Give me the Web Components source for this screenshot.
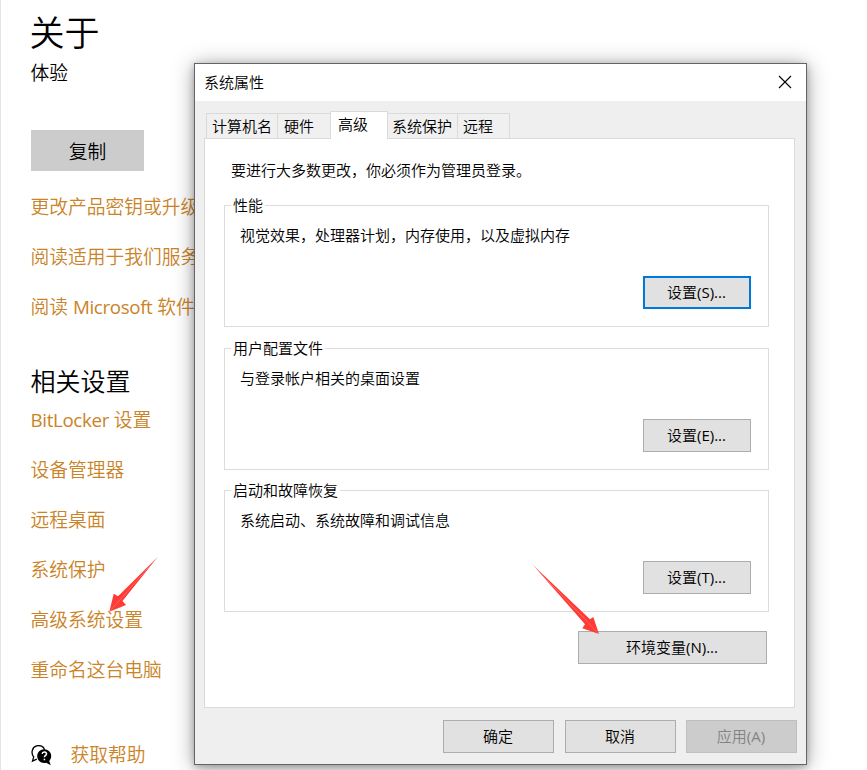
<!DOCTYPE html>
<html lang="zh-CN">
<head>
<meta charset="utf-8">
<title>系统属性</title>
<style>
  body {
    margin: 0;
    width: 867px;
    height: 770px;
    overflow: hidden;
    background: #fff;
    color: #000;
    font-family: "Open Sans", "Noto Sans CJK SC", sans-serif;
  }
  /* латиница */
  i { font-style: normal; font-weight: 400; }
  side-link i { letter-spacing: -.35px; }
</style>
</head>
<body>

<!-- страница "О системе" -->
<template id="about-tmpl">
  <style>
    :host { display: flex; flex-direction: column; align-items: flex-start; box-sizing: border-box; height: 770px; padding: 8px 0 0 29.5px; border-left: 1px solid #e5e5e5; font-size: 18.75px; font-weight: 350; }
    :host > *, h1, p, button, h2, nav, .help { flex-shrink: 0; }
    h1 { margin: 0 0 0 -1px; font-size: 35px; font-weight: 350; line-height: 50px; }
    p { margin: 1px 0 0; line-height: 28px; }
    button { width: 113px; height: 41px; margin: 43px 0 16px .5px; padding: 0; border: 0; background: #ccc; font: inherit; color: #000; }
    h2 { margin: 36px 0 1px; font-size: 25px; font-weight: 350; line-height: 36px; }
    nav { display: flex; flex-direction: column; gap: 10px; }
    .help { display: flex; align-items: center; gap: 18.500px; margin: 45px 0 0 .5px; }
    svg { width: 21px; height: 21px; }
  </style>
  <h1>关于</h1>
  <p>体验</p>
  <button>复制</button>
  <nav><slot name="links"></slot></nav>
  <h2>相关设置</h2>
  <nav><slot name="related"></slot></nav>
  <div class="help">
    <svg viewBox="0 0 21 21">
      <path d="M5.8 14.2 1.5 16l1.2-4C-.2 8.500.8 2.300 5.600.9c3.500-1 7 .5 8 3.800" fill="none" stroke="#000" stroke-width="1.300"/>
      <path d="M13.200 4.200c4 0 7 3 7 6.700 0 2-.8 3.700-2 5l1.600 4.400-4.600-2.500c-.6.2-1.300.3-2 .3-4 0-7-3-7-7s3-6.900 7-6.900z"/>
      <path d="M11.200 8.900c.2-2.600 4.700-2.300 4.300.2-.3 1.400-2.100 1.400-2.100 3.200M13.400 13.700v1.500" fill="none" stroke="#fff" stroke-width="1.500"/>
    </svg>
    <slot name="help"></slot>
  </div>
</template>

<!-- окно -->
<template id="window-tmpl">
  <style>
    :host { position: absolute; left: 194px; top: 63px; display: flex; flex-direction: column; box-sizing: border-box; width: 613px; height: 702px; border: 1px solid #636467; background: #efefef; box-shadow: 0 2px 20px rgba(0, 0, 0, .36), 0 2px 7px rgba(0, 0, 0, .24); font-size: 15px; font-weight: 350; }
    header { display: flex; align-items: center; justify-content: space-between; box-sizing: border-box; height: 37px; padding: 0 14px 2px 9px; background: #fff; }
    svg { width: 14px; height: 14px; }
    .tabs { display: flex; align-items: flex-end; height: 28px; margin: 10px 0 -1px 11px; z-index: 1; }
    main { box-sizing: border-box; width: 591px; height: 570px; margin-left: 9px; padding: 19px 25px 0 19px; border: 1px solid #dadada; background: #fff; }
    footer { display: flex; justify-content: flex-end; gap: 10px; padding: 12px 9px 0 0; }
  </style>
  <header>
    <span><slot name="title"></slot></span>
    <svg viewBox="0 0 14 14"><path d="M1 1l12 12M13 1 1 13" stroke="#000" stroke-width="1.100"/></svg>
  </header>
  <div class="tabs"><slot name="tabs"></slot></div>
  <main><slot></slot></main>
  <footer><slot name="buttons"></slot></footer>
</template>

<!-- группа настроек -->
<template id="group-tmpl">
  <style>
    :host { display: block; height: 133px; margin-bottom: 10px; }
    :host([short]) { margin-bottom: 9px; }
    fieldset { display: flex; flex-direction: column; justify-content: space-between; box-sizing: border-box; height: 133px; margin: 0; padding: 7px 17px 17px 15px; border: 1px solid #dcdcdc; }
    legend { height: 22px; margin-left: -9px; padding: 0 2px; line-height: 22px; }
    p { margin: 0; line-height: 24px; }
    div { display: flex; justify-content: flex-end; }
  </style>
  <fieldset>
    <legend></legend>
    <p><slot></slot></p>
    <div><slot name="action"></slot></div>
  </fieldset>
</template>

<about-page>
  <side-link slot="links">更改产品密钥或升级</side-link>
  <side-link slot="links">阅读适用于我们服务</side-link>
  <side-link slot="links">阅读 <i>Microsoft</i> 软件</side-link>
  <side-link slot="related"><i>BitLocker</i> 设置</side-link>
  <side-link slot="related">设备管理器</side-link>
  <side-link slot="related">远程桌面</side-link>
  <side-link slot="related">系统保护</side-link>
  <side-link slot="related">高级系统设置</side-link>
  <side-link slot="related">重命名这台电脑</side-link>
  <side-link slot="help">获取帮助</side-link>
</about-page>

<system-window>
  <span slot="title">系统属性</span>
  <win-tab slot="tabs" style="width: 71px">计算机名</win-tab>
  <win-tab slot="tabs" style="width: 53px; padding-left: 6px">硬件</win-tab>
  <win-tab slot="tabs" style="width: 58px" selected>高级</win-tab>
  <win-tab slot="tabs" style="width: 70px; padding-left: 4px">系统保护</win-tab>
  <win-tab slot="tabs" style="width: 53px">远程</win-tab>

  <win-note>要进行大多数更改，你必须作为管理员登录。</win-note>
  <win-group label="性能">
    视觉效果，处理器计划，内存使用，以及虚拟内存
    <win-button slot="action" focused>设置<i>(S)...</i></win-button>
  </win-group>
  <win-group label="用户配置文件" short>
    与登录帐户相关的桌面设置
    <win-button slot="action">设置<i>(E)...</i></win-button>
  </win-group>
  <win-group label="启动和故障恢复">
    系统启动、系统故障和调试信息
    <win-button slot="action">设置<i>(T)...</i></win-button>
  </win-group>
  <win-button style="width: 189px; margin: 19px 2px 0 auto">环境变量<i>(N)...</i></win-button>

  <win-button slot="buttons" style="width: 111px; margin-right: 1px">确定</win-button>
  <win-button slot="buttons" style="width: 111px">取消</win-button>
  <win-button slot="buttons" style="width: 111px" disabled>应用<i>(A)</i></win-button>
</system-window>

<red-arrow style="left: 105px; top: 553px" points="52.700,4 4.300,58.700 8.700,40.700 13,43.300" tail="52.700,4 17.500,48 21,52 4.300,58.700"></red-arrow>
<red-arrow style="left: 529px; top: 561px" points="4,4 61,58.300 64.300,56 70,73" tail="4,4 56,63.300 53.300,67.300 70,73"></red-arrow>

<script>
function fromTemplate(id) {
  return class extends HTMLElement {
    connectedCallback() {
      const shadow = this.attachShadow({mode: 'open'});
      shadow.append(document.getElementById(id).content.cloneNode(true));
    }
  };
}

customElements.define('about-page', fromTemplate('about-tmpl'));
customElements.define('system-window', fromTemplate('window-tmpl'));

customElements.define('win-group', class extends fromTemplate('group-tmpl') {
  connectedCallback() {
    super.connectedCallback();
    this.shadowRoot.querySelector('legend').textContent = this.getAttribute('label');
  }
});

customElements.define('side-link', class extends HTMLElement {
  connectedCallback() {
    this.attachShadow({mode: 'open'}).innerHTML = `
      <style>
        :host { display: block; height: 40px; line-height: 40px; color: #ca8327; white-space: nowrap; }
      </style>
      <slot></slot>
    `;
  }
});

customElements.define('win-tab', class extends HTMLElement {
  connectedCallback() {
    this.attachShadow({mode: 'open'}).innerHTML = `
      <style>
        :host { display: block; box-sizing: border-box; height: 26px; padding-left: 5px; border: 1px solid #dadada; border-right: 0; background: #f0f0f0; line-height: 25px; white-space: nowrap; }
        :host(:last-of-type) { border-right: 1px solid #dadada; }
        :host([selected]) { height: 28px; padding-left: 7px; border-right: 1px solid #dadada; border-bottom: 0; background: #fff; margin-right: -1px; line-height: 24px; }
      </style>
      <slot></slot>
    `;
  }
});

customElements.define('win-note', class extends HTMLElement {
  connectedCallback() {
    this.attachShadow({mode: 'open'}).innerHTML = `
      <style>
        :host { display: block; height: 36px; padding-left: 7px; line-height: 24px; }
      </style>
      <slot></slot>
    `;
  }
});

customElements.define('win-button', class extends HTMLElement {
  connectedCallback() {
    this.attachShadow({mode: 'open'}).innerHTML = `
      <style>
        :host { display: flex; align-items: center; justify-content: center; box-sizing: border-box; width: 108px; height: 33px; padding: 0 1px 2px 0; border: 1px solid #adadad; background: #e1e1e1; }
        :host([focused]) { border: 2px solid #0078d7; }
        :host([disabled]) { border-color: #bfbfbf; background: #ccc; color: #838383; }
      </style>
      <span><slot></slot></span>
    `;
  }
});

// стрелка поверх окна
customElements.define('red-arrow', class extends HTMLElement {
  connectedCallback() {
    this.attachShadow({mode: 'open'}).innerHTML = `
      <style>
        :host { position: absolute; display: block; width: 76px; height: 78px; }
      </style>
      <svg width="76" height="78" fill="#ff3b36">
        <polygon points="${this.getAttribute('points')}"/>
        <polygon points="${this.getAttribute('tail')}"/>
      </svg>
    `;
  }
});
</script>
</body>
</html>
